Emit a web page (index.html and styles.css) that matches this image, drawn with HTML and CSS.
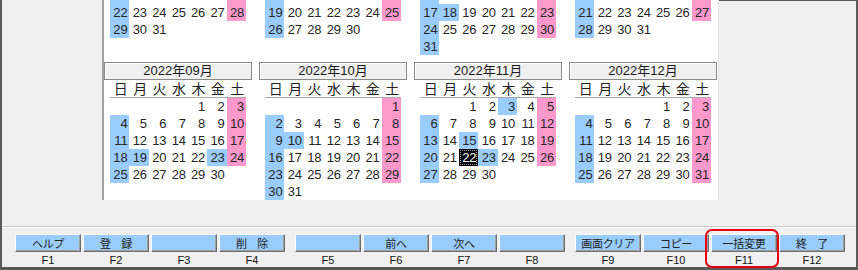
FILE: index.html
```html
<!DOCTYPE html>
<html lang="ja">
<head>
<meta charset="utf-8">
<title>カレンダー</title>
<link rel="stylesheet" href="styles.css">
</head>
<body>
<div class="frame">
  <div class="main">
    <div class="side"></div>
    <div class="cal">
      <div class="months">
        <!-- May -->
        <div class="month">
          <div class="mh">2022年05月</div>
          <div class="wk"><span>日</span><span>月</span><span>火</span><span>水</span><span>木</span><span>金</span><span>土</span></div>
          <div class="days">
            <span class="b">1</span><span>2</span><span class="b">3</span><span class="b">4</span><span class="b">5</span><span>6</span><span class="p">7</span>
            <span class="b">8</span><span>9</span><span>10</span><span>11</span><span>12</span><span>13</span><span class="p">14</span>
            <span class="b">15</span><span>16</span><span>17</span><span>18</span><span>19</span><span>20</span><span class="p">21</span>
            <span class="b">22</span><span>23</span><span>24</span><span>25</span><span>26</span><span>27</span><span class="p">28</span>
            <span class="b">29</span><span>30</span><span>31</span>
          </div>
        </div>
        <!-- June -->
        <div class="month">
          <div class="mh">2022年06月</div>
          <div class="wk"><span>日</span><span>月</span><span>火</span><span>水</span><span>木</span><span>金</span><span>土</span></div>
          <div class="days">
            <span></span><span></span><span></span><span>1</span><span>2</span><span>3</span><span class="p">4</span>
            <span class="b">5</span><span>6</span><span>7</span><span>8</span><span>9</span><span>10</span><span class="p">11</span>
            <span class="b">12</span><span>13</span><span>14</span><span>15</span><span>16</span><span>17</span><span class="p">18</span>
            <span class="b">19</span><span>20</span><span>21</span><span>22</span><span>23</span><span>24</span><span class="p">25</span>
            <span class="b">26</span><span>27</span><span>28</span><span>29</span><span>30</span>
          </div>
        </div>
        <!-- July -->
        <div class="month">
          <div class="mh">2022年07月</div>
          <div class="wk"><span>日</span><span>月</span><span>火</span><span>水</span><span>木</span><span>金</span><span>土</span></div>
          <div class="days">
            <span></span><span></span><span></span><span></span><span></span><span>1</span><span class="p">2</span>
            <span class="b">3</span><span>4</span><span>5</span><span>6</span><span>7</span><span>8</span><span class="p">9</span>
            <span class="b">10</span><span>11</span><span>12</span><span>13</span><span>14</span><span>15</span><span class="p">16</span>
            <span class="b">17</span><span class="b">18</span><span>19</span><span>20</span><span>21</span><span>22</span><span class="p">23</span>
            <span class="b">24</span><span>25</span><span>26</span><span>27</span><span>28</span><span>29</span><span class="p">30</span>
            <span class="b">31</span>
          </div>
        </div>
        <!-- August -->
        <div class="month">
          <div class="mh">2022年08月</div>
          <div class="wk"><span>日</span><span>月</span><span>火</span><span>水</span><span>木</span><span>金</span><span>土</span></div>
          <div class="days">
            <span></span><span>1</span><span>2</span><span>3</span><span>4</span><span>5</span><span class="p">6</span>
            <span class="b">7</span><span>8</span><span>9</span><span>10</span><span class="b">11</span><span>12</span><span class="p">13</span>
            <span class="b">14</span><span>15</span><span>16</span><span>17</span><span>18</span><span>19</span><span class="p">20</span>
            <span class="b">21</span><span>22</span><span>23</span><span>24</span><span>25</span><span>26</span><span class="p">27</span>
            <span class="b">28</span><span>29</span><span>30</span><span>31</span>
          </div>
        </div>
        <!-- September -->
        <div class="month">
          <div class="mh">2022年09月</div>
          <div class="wk"><span>日</span><span>月</span><span>火</span><span>水</span><span>木</span><span>金</span><span>土</span></div>
          <div class="days">
            <span></span><span></span><span></span><span></span><span>1</span><span>2</span><span class="p">3</span>
            <span class="b">4</span><span>5</span><span>6</span><span>7</span><span>8</span><span>9</span><span class="p">10</span>
            <span class="b">11</span><span>12</span><span>13</span><span>14</span><span>15</span><span>16</span><span class="p">17</span>
            <span class="b">18</span><span class="b">19</span><span>20</span><span>21</span><span>22</span><span class="b">23</span><span class="p">24</span>
            <span class="b">25</span><span>26</span><span>27</span><span>28</span><span>29</span><span>30</span>
          </div>
        </div>
        <!-- October -->
        <div class="month">
          <div class="mh">2022年10月</div>
          <div class="wk"><span>日</span><span>月</span><span>火</span><span>水</span><span>木</span><span>金</span><span>土</span></div>
          <div class="days">
            <span></span><span></span><span></span><span></span><span></span><span></span><span class="p">1</span>
            <span class="b">2</span><span>3</span><span>4</span><span>5</span><span>6</span><span>7</span><span class="p">8</span>
            <span class="b">9</span><span class="b">10</span><span>11</span><span>12</span><span>13</span><span>14</span><span class="p">15</span>
            <span class="b">16</span><span>17</span><span>18</span><span>19</span><span>20</span><span>21</span><span class="p">22</span>
            <span class="b">23</span><span>24</span><span>25</span><span>26</span><span>27</span><span>28</span><span class="p">29</span>
            <span class="b">30</span><span>31</span>
          </div>
        </div>
        <!-- November -->
        <div class="month">
          <div class="mh">2022年11月</div>
          <div class="wk"><span>日</span><span>月</span><span>火</span><span>水</span><span>木</span><span>金</span><span>土</span></div>
          <div class="days">
            <span></span><span></span><span>1</span><span>2</span><span class="b">3</span><span>4</span><span class="p">5</span>
            <span class="b">6</span><span>7</span><span>8</span><span>9</span><span>10</span><span>11</span><span class="p">12</span>
            <span class="b">13</span><span>14</span><span class="b">15</span><span>16</span><span>17</span><span>18</span><span class="p">19</span>
            <span class="b">20</span><span>21</span><span class="sel">22</span><span class="b">23</span><span>24</span><span>25</span><span class="p">26</span>
            <span class="b">27</span><span>28</span><span>29</span><span>30</span>
          </div>
        </div>
        <!-- December -->
        <div class="month">
          <div class="mh">2022年12月</div>
          <div class="wk"><span>日</span><span>月</span><span>火</span><span>水</span><span>木</span><span>金</span><span>土</span></div>
          <div class="days">
            <span></span><span></span><span></span><span></span><span>1</span><span>2</span><span class="p">3</span>
            <span class="b">4</span><span>5</span><span>6</span><span>7</span><span>8</span><span>9</span><span class="p">10</span>
            <span class="b">11</span><span>12</span><span>13</span><span>14</span><span>15</span><span>16</span><span class="p">17</span>
            <span class="b">18</span><span>19</span><span>20</span><span>21</span><span>22</span><span>23</span><span class="p">24</span>
            <span class="b">25</span><span>26</span><span>27</span><span>28</span><span>29</span><span>30</span><span class="p">31</span>
          </div>
        </div>
      </div>
    </div>
    <div class="side-r"></div>
  </div>
  <div class="sep"></div>
  <div class="fkeys">
    <div class="group">
      <div class="fkey"><div class="btn">ヘルプ</div><div class="lbl">F1</div></div>
      <div class="fkey"><div class="btn">登　録</div><div class="lbl">F2</div></div>
      <div class="fkey"><div class="btn"></div><div class="lbl">F3</div></div>
      <div class="fkey"><div class="btn">削　除</div><div class="lbl">F4</div></div>
    </div>
    <div class="group">
      <div class="fkey"><div class="btn"></div><div class="lbl">F5</div></div>
      <div class="fkey"><div class="btn">前へ</div><div class="lbl">F6</div></div>
      <div class="fkey"><div class="btn">次へ</div><div class="lbl">F7</div></div>
      <div class="fkey"><div class="btn"></div><div class="lbl">F8</div></div>
    </div>
    <div class="group">
      <div class="fkey"><div class="btn">画面クリア</div><div class="lbl">F9</div></div>
      <div class="fkey"><div class="btn">コピー</div><div class="lbl">F10</div></div>
      <div class="fkey"><div class="btn">一括変更</div><div class="lbl">F11</div><div class="ring"></div></div>
      <div class="fkey"><div class="btn">終　了</div><div class="lbl">F12</div></div>
    </div>
  </div>
</div>
</body>
</html>
```
FILE: styles.css
```css
* { box-sizing: border-box; margin: 0; padding: 0; }

body {
  width: 858px;
  height: 270px;
  background: #f0f0f0;
  font-family: "Noto Sans CJK JP", sans-serif;
  overflow: hidden;
}

.frame {
  width: 858px;
  height: 270px;
  border-left: 2px solid #5a5a5a;
  border-right: 2px solid #5a5a5a;
  border-bottom: 3px solid #5a5a5a;
  display: flex;
  flex-direction: column;
}

.main {
  display: flex;
  height: 200px;
}

.side { width: 100px; }

.cal {
  width: 617px;
  height: 200px;
  background: #fff;
  border-left: 2px solid #a0a0a0;
  border-right: 1px solid #e3e3e3;
  overflow: hidden;
}

.side-r {
  flex: 1;
  border-top: 1px solid #5a5a5a;
}

.months {
  display: grid;
  grid-template-columns: repeat(4, 148px);
  column-gap: 7px;
  row-gap: 7px;
  margin-top: -83px;
}

.mh {
  height: 18px;
  border: 1px solid #8a8a8a;
  background: #f0f0f0;
  box-shadow: inset 1px 1px 0 #fff;
  text-align: center;
  font: 13px/16px "Liberation Sans", "Noto Sans CJK JP", sans-serif;
  color: #1a1a1a;
}

.wk {
  display: grid;
  grid-template-columns: repeat(7, 1fr);
  margin: 0 6px;
  height: 18px;
  border-bottom: 1px solid #a8a8a8;
  font: 14px/17px "Noto Sans CJK JP", sans-serif;
  color: #222;
}

.wk span {
  text-align: center;
  padding-left: 2px;
}

.days {
  display: grid;
  grid-template-columns: repeat(7, 1fr);
  grid-auto-rows: 17px;
  height: 102px;
  margin: 0 6px;
  font: 13px/17px "Liberation Sans", sans-serif;
  letter-spacing: -0.2px;
  color: #262626;
}

.days span {
  text-align: right;
  padding-right: 2px;
}

.days .b { background: #99ccff; }
.days .p { background: #ff99cc; }
.days .sel {
  background: #000;
  color: #fff;
  outline: 1px dotted #9a9a9a;
  outline-offset: -2px;
}

.sep {
  margin-top: 26px;
  border-top: 1px solid #cdcdcd;
  border-bottom: 1px solid #fafafa;
}

.fkeys {
  display: flex;
  gap: 10px;
  padding: 6px 0 0 13px;
}

.group {
  display: grid;
  grid-template-columns: repeat(4, 66px);
  column-gap: 2px;
}

.fkey { position: relative; }

.btn {
  height: 18px;
  background: #99ccff;
  border: 1px solid;
  border-color: #fff #6e6e6e #6e6e6e #fff;
  box-shadow: inset -1px -1px 0 #a0a0a0;
  text-align: center;
  font: 11px/16px "Noto Sans CJK JP", sans-serif;
  letter-spacing: -0.3px;
  color: #222;
}

.lbl {
  margin-top: 2px;
  text-align: center;
  font: 11px/12px "Liberation Sans", sans-serif;
  color: #111;
}

.ring {
  position: absolute;
  left: -6px;
  right: -2px;
  top: -5px;
  bottom: -2px;
  border: 2.5px solid #e60012;
  border-radius: 7px;
}
```
